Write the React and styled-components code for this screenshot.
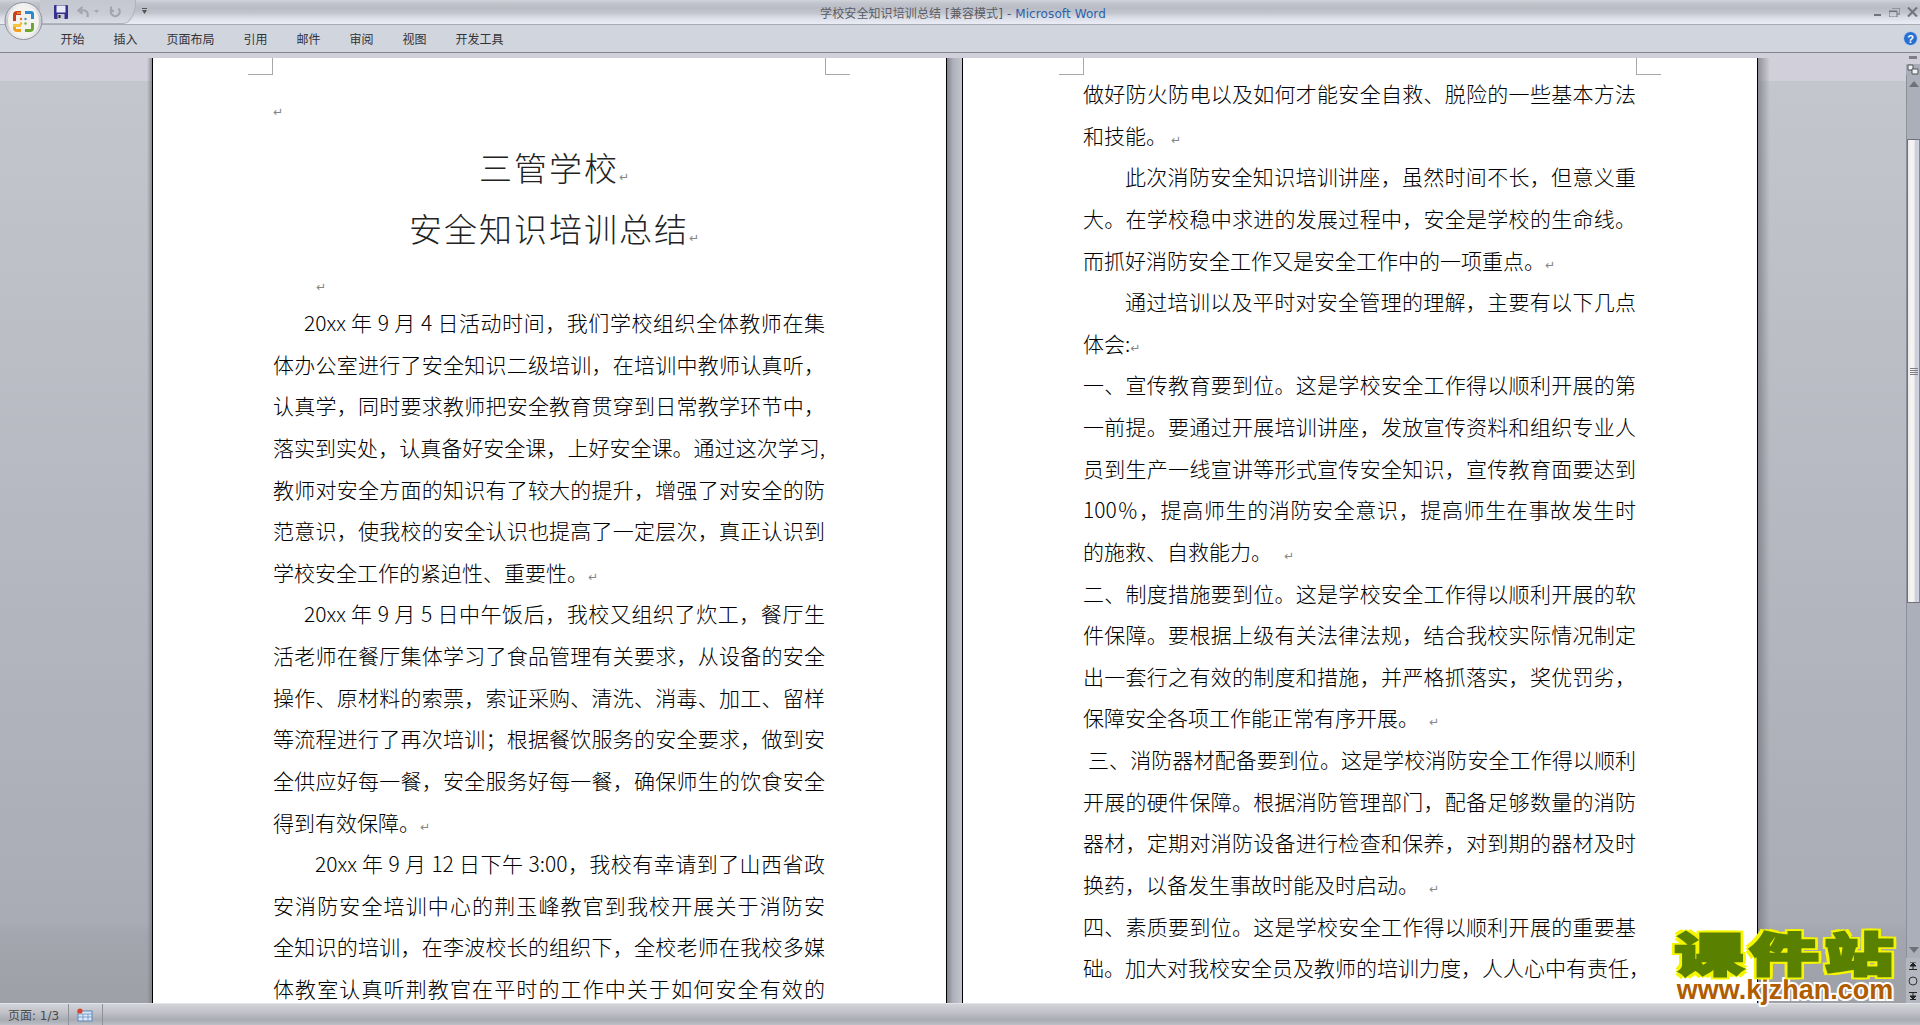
import React from 'react'
import styled, { createGlobalStyle } from 'styled-components'

const CJK = `"Noto Sans CJK SC", "Noto Sans", sans-serif`
const UI = `"DejaVu Sans", "Noto Sans CJK SC", sans-serif`

const GlobalStyle = createGlobalStyle`
  html, body { margin: 0; padding: 0; height: 100%; overflow: hidden; }
  #root { height: 100%; }
`

const Window = styled.div`
  position: relative;
  width: 100%;
  height: 100vh;
  display: flex;
  flex-direction: column;
  overflow: hidden;
  font-family: ${UI};
`

const TitleBar = styled.div`
  height: 24px;
  flex: none;
  display: grid;
  grid-template-columns: 1fr auto 1fr;
  align-items: center;
  border-bottom: 1px solid #a9abb3;
  background: linear-gradient(#d0d3da 0, #c3c5ce 3px, #b9bbc5 8px, #c2c5ce 13px, #d8dbe4 17px, #e8ebf3 23px);
`

const QuickBar = styled.div`
  justify-self: start;
  display: flex;
  align-items: center;
  height: 23px;
  margin-left: 40px;
  padding: 0 0 0 14px;
  width: 81px;
  border: 1px solid #afb2ba;
  border-top: 0;
  border-left: 0;
  border-radius: 0 0 13px 0 / 0 0 22px 0;
  background: linear-gradient(#c4c7cf, #c9ccd4 60%, #d9dce4);
`

const QuickIcon = styled.svg`
  flex: none;
  display: block;
  margin-right: ${props => props.$gap || 0}px;
`

const QuickMenu = styled.svg`
  position: absolute;
  left: 142px;
  top: 8px;
`

const TitleText = styled.div`
  font-size: 12px;
  letter-spacing: 0.1px;
  padding-left: 6px;
  white-space: nowrap;
  color: #585c64;
`

const AppName = styled.span`
  color: #2b62aa;
`

const WindowControls = styled.div`
  justify-self: end;
  display: flex;
  align-items: center;
  gap: 7px;
  padding-right: 2px;
`

const RibbonBar = styled.div`
  height: 27px;
  flex: none;
  display: flex;
  align-items: center;
  padding: 0 2px 0 46px;
  background: #d1d5de;
  border-bottom: 1px solid #83858c;
`

const Tab = styled.div`
  padding: 0 14.5px;
  font-size: 12px;
  font-family: ${CJK};
  color: #333336;
`

const HelpIcon = styled.svg`
  margin-left: auto;
`

const OfficeButton = styled.svg`
  position: absolute;
  left: 4px;
  top: 2px;
`

const Workspace = styled.div`
  flex: 1;
  min-height: 0;
  display: flex;
  background: linear-gradient(#d1cfd9 0, #d1cfd9 28px, #c4c6ce 28px, #a9acb5 870px, #a3a6ae 880px, #9da0a7 100%);
`

const Pages = styled.div`
  flex: 1;
  min-width: 0;
  display: flex;
  padding: 5px 0 0 147px;
  overflow: hidden;
`

const PageEdge = styled.div`
  flex: none;
  width: ${props => props.$width}px;
  background: ${props => `linear-gradient(${props.$to}, rgba(120,122,130,0.75), rgba(120,122,130,0))`};
`

const PageGap = styled.div`
  flex: none;
  width: 15px;
  background: linear-gradient(90deg, #83858c, #aeb1ba 40%, #c2c5cd);
`

const Page = styled.div`
  position: relative;
  flex: none;
  box-sizing: border-box;
  width: ${props => props.$width}px;
  padding: ${props => props.$top}px 121px 0 120px;
  background: #fff;
  border-left: 1px solid #000;
  border-right: 1px solid #000;
  font-family: ${CJK};
  color: #000;
  overflow: hidden;
`

const CropMark = styled.div`
  position: absolute;
  top: 0;
  width: 24px;
  height: 16px;
  border-bottom: 1px solid #a8a8a8;
  ${props => props.$side === 'left'
    ? `left: ${props.$inset}px; border-right: 1px solid #a8a8a8;`
    : `right: ${props.$inset}px; border-left: 1px solid #a8a8a8;`}
`

const BlankLine = styled.div`
  height: ${props => props.$height}px;
  padding-left: ${props => props.$indent || 0}px;
  padding-top: ${props => props.$pad || 0}px;
  box-sizing: border-box;
`

const Heading = styled.div`
  height: 61px;
  line-height: 61px;
  padding-left: 12px;
  text-align: center;
  font-size: 33px;
  font-weight: 300;
  letter-spacing: 2px;
  white-space: nowrap;
  color: #222;
`

const Line = styled.div`
  height: 41.63px;
  line-height: 41.63px;
  padding-left: ${props => props.$indent || 0}px;
  font-size: 21px;
  font-weight: 300;
  white-space: nowrap;
  text-align: justify;
  text-align-last: ${props => props.$full ? 'justify' : 'left'};
`

const Mark = styled.span`
  display: inline-block;
  margin-left: ${props => props.$gap || 0}px;
  font-family: "DejaVu Sans", sans-serif;
  font-size: 12px;
  font-weight: 400;
  line-height: 10px;
  vertical-align: 0;
  color: #858585;
`

const ScrollColumn = styled.div`
  flex: none;
  width: 14px;
  display: flex;
  flex-direction: column;
`

const RulerSlot = styled.div`
  height: 11px;
  padding: 3px 3px 0;
  box-sizing: border-box;
`

const RulerDash = styled.div`
  height: 3px;
  background: #7d7f86;
`

const RulerToggle = styled.div`
  height: 11px;
  display: flex;
  justify-content: center;
  background: #a9adb7;
`

const ScrollButton = styled.div`
  height: ${props => props.$height}px;
  display: flex;
  align-items: center;
  justify-content: center;
  background: #abafb9;
  border-left: 1px solid #8d9099;
`

const ScrollTrack = styled.div`
  flex: 1;
  padding-top: 46px;
  background: #abafb9;
  border-left: 1px solid #8d9099;
`

const ScrollThumb = styled.div`
  box-sizing: border-box;
  height: 464px;
  display: flex;
  flex-direction: column;
  align-items: center;
  justify-content: center;
  gap: 1px;
  border: 1px solid #6f7279;
  border-right-color: #85878e;
  background: linear-gradient(90deg, #e9eaf0 0, #fbf6ec 35%, #eef0f6 55%, #c9ccd8 70%, #d5d8e2 100%);
`

const Grip = styled.div`
  width: 8px;
  height: 1px;
  background: #7c7f86;
`

const NavGroup = styled.div`
  height: 45px;
  display: flex;
  flex-direction: column;
  align-items: center;
  background: #b4b7c0;
`

const NavButton = styled.div`
  height: 15px;
  display: flex;
  align-items: center;
  justify-content: center;
`

const StatusBar = styled.div`
  height: 22px;
  flex: none;
  display: flex;
  align-items: stretch;
  box-sizing: border-box;
  border-top: 1px solid #e3e4e8;
  background: linear-gradient(#d2d4da, #c0c2c8 40%, #a9abb3 75%, #bdbfc6);
`

const StatusItem = styled.div`
  display: flex;
  align-items: center;
  width: ${props => props.$width}px;
  padding-left: ${props => props.$pad}px;
  box-sizing: border-box;
  border-right: 1px solid #8f9198;
  font-size: 12px;
  color: #4a4a4e;
  white-space: nowrap;
`

const Watermark = styled.div`
  position: absolute;
  left: 1668px;
  top: 926px;
  width: 234px;
  display: flex;
  flex-direction: column;
  align-items: center;
`

const MarkName = styled.div`
  font-family: ${CJK};
  font-size: 46px;
  line-height: 50px;
  font-weight: 900;
  letter-spacing: 4px;
  margin-right: -4px;
  color: #5a8000;
  -webkit-text-stroke: 2.5px #5a8000;
  text-shadow: 3px 0 #f5f500, -3px 0 #f5f500, 0 3px #f5f500, 0 -3px #f5f500,
    3px 3px #f5f500, -3px 3px #f5f500, 3px -3px #f5f500, -3px -3px #f5f500;
  transform: scaleX(1.5);
`

const MarkUrl = styled.div`
  font-family: "Liberation Sans", sans-serif;
  font-size: 27px;
  line-height: 28px;
  font-weight: 700;
  color: #b05c00;
  -webkit-text-stroke: 4px #fff;
  paint-order: stroke fill;
`

const tabs = ['开始', '插入', '页面布局', '引用', '邮件', '审阅', '视图', '开发工具']

const leftPage = [
  {
    indent: 31,
    lines: [
      '20xx 年 9 月 4 日活动时间，我们学校组织全体教师在集',
      '体办公室进行了安全知识二级培训，在培训中教师认真听，',
      '认真学，同时要求教师把安全教育贯穿到日常教学环节中，',
      '落实到实处，认真备好安全课，上好安全课。通过这次学习,',
      '教师对安全方面的知识有了较大的提升，增强了对安全的防',
      '范意识，使我校的安全认识也提高了一定层次，真正认识到',
      '学校安全工作的紧迫性、重要性。',
    ],
  },
  {
    indent: 31,
    lines: [
      '20xx 年 9 月 5 日中午饭后，我校又组织了炊工，餐厅生',
      '活老师在餐厅集体学习了食品管理有关要求，从设备的安全',
      '操作、原材料的索票，索证采购、清洗、消毒、加工、留样',
      '等流程进行了再次培训；根据餐饮服务的安全要求，做到安',
      '全供应好每一餐，安全服务好每一餐，确保师生的饮食安全',
      '得到有效保障。',
    ],
  },
  {
    indent: 42,
    open: true,
    lines: [
      '20xx 年 9 月 12 日下午 3:00，我校有幸请到了山西省政',
      '安消防安全培训中心的荆玉峰教官到我校开展关于消防安',
      '全知识的培训，在李波校长的组织下，全校老师在我校多媒',
      '体教室认真听荆教官在平时的工作中关于如何安全有效的',
    ],
  },
]

const rightPage = [
  {
    lines: ['做好防火防电以及如何才能安全自救、脱险的一些基本方法', '和技能。'],
    gap: 4,
  },
  {
    indent: 42,
    lines: [
      '此次消防安全知识培训讲座，虽然时间不长，但意义重',
      '大。在学校稳中求进的发展过程中，安全是学校的生命线。',
      '而抓好消防安全工作又是安全工作中的一项重点。',
    ],
  },
  {
    indent: 42,
    lines: ['通过培训以及平时对安全管理的理解，主要有以下几点', '体会:'],
  },
  {
    lines: [
      '一、宣传教育要到位。这是学校安全工作得以顺利开展的第',
      '一前提。要通过开展培训讲座，发放宣传资料和组织专业人',
      '员到生产一线宣讲等形式宣传安全知识，宣传教育面要达到',
      '100％，提高师生的消防安全意识，提高师生在事故发生时',
      '的施救、自救能力。',
    ],
    gap: 12,
  },
  {
    lines: [
      '二、制度措施要到位。这是学校安全工作得以顺利开展的软',
      '件保障。要根据上级有关法律法规，结合我校实际情况制定',
      '出一套行之有效的制度和措施，并严格抓落实，奖优罚劣，',
      '保障安全各项工作能正常有序开展。',
    ],
    gap: 10,
  },
  {
    indent: 5,
    lines: [
      '三、消防器材配备要到位。这是学校消防安全工作得以顺利',
      '开展的硬件保障。根据消防管理部门，配备足够数量的消防',
      '器材，定期对消防设备进行检查和保养，对到期的器材及时',
      '换药，以备发生事故时能及时启动。',
    ],
    gap: 10,
  },
  {
    open: true,
    lines: [
      '四、素质要到位。这是学校安全工作得以顺利开展的重要基',
      '础。加大对我校安全员及教师的培训力度，人人心中有责任，',
    ],
  },
]

function Paragraph({ indent, lines, open, gap }) {
  return lines.map((text, i) => {
    const last = i === lines.length - 1 && !open
    return (
      <Line key={i} $indent={i === 0 ? indent : 0} $full={!last}>
        {text}
        {last && <Mark $gap={gap}>↵</Mark>}
      </Line>
    )
  })
}

function OfficeLogo() {
  return (
    <OfficeButton width="40" height="40" viewBox="0 0 40 40">
      <defs>
        <linearGradient id="orb" x1="0" y1="0" x2="0" y2="1">
          <stop offset="0" stopColor="#f6f6f8" />
          <stop offset="0.5" stopColor="#c4c7ce" />
          <stop offset="1" stopColor="#f2f2f4" />
        </linearGradient>
      </defs>
      <circle cx="19.5" cy="19" r="18.5" fill="url(#orb)" stroke="#8e9097" />
      <circle cx="19.5" cy="19" r="15.5" fill="#f4f2ee" />
      <path d="M9 13 Q9 9 13 9 H17 V13 H12 V19 H9 Z" fill="#c8401a" />
      <path d="M13 10 H17 V12 H13 Z" fill="#ef7a2a" />
      <path d="M21 9 H27 Q30 9 30 12 V17 H27 V12 H21 Z" fill="#2f87cc" />
      <path d="M9 22 H12 V27 H17 V30 H13 Q9 30 9 26 Z" fill="#f0a020" />
      <rect x="9" y="22" width="8" height="3" fill="#f6c33c" />
      <path d="M30 21 V26 Q30 30 26 30 H21 V27 H27 V21 Z" fill="#6fa534" />
      <circle cx="17" cy="17" r="1.2" fill="#e0702a" />
      <circle cx="21.5" cy="17" r="1.2" fill="#4a90d0" />
      <circle cx="17" cy="21.5" r="1.2" fill="#f0b030" />
      <circle cx="21.5" cy="21.5" r="1.2" fill="#7ab040" />
    </OfficeButton>
  )
}

function SaveIcon() {
  return (
    <QuickIcon $gap={9} width="14" height="14" viewBox="0 0 14 14">
      <rect x="0" y="0" width="14" height="14" rx="1" fill="#33308f" />
      <rect x="2.5" y="0.5" width="9" height="7" fill="#e8eaf8" />
      <rect x="3.5" y="9" width="7" height="5" fill="#c9cbd4" />
      <rect x="4.5" y="10" width="2" height="3" fill="#222" />
    </QuickIcon>
  )
}

function UndoIcon() {
  return (
    <QuickIcon $gap={5} width="12" height="12" viewBox="0 0 12 12">
      <path d="M10.5 11 C11.5 6 9 3.5 4 4.5 M5.5 1 L1.5 4.5 L5.5 7.5" fill="none" stroke="#a2a5ae" strokeWidth="2.2" />
    </QuickIcon>
  )
}

function SmallArrow() {
  return (
    <QuickIcon $gap={10} width="5" height="3" viewBox="0 0 5 3">
      <path d="M0 0 H5 L2.5 3 Z" fill="#a2a5ae" />
    </QuickIcon>
  )
}

function RedoIcon() {
  return (
    <QuickIcon width="12" height="12" viewBox="0 0 12 12">
      <path d="M9.5 2.5 A4.5 4.5 0 1 1 3 2.5 M2 0.5 V5 H5" fill="none" stroke="#a2a5ae" strokeWidth="2.2" />
    </QuickIcon>
  )
}

function Triangle({ down }) {
  return (
    <svg width="10" height="6" viewBox="0 0 10 6">
      <path d={down ? 'M0 0 H10 L5 6 Z' : 'M0 6 H10 L5 0 Z'} fill="#6e7178" />
    </svg>
  )
}

export default function App() {
  return (
    <Window>
      <GlobalStyle />
      <TitleBar>
        <QuickBar>
          <SaveIcon />
          <UndoIcon />
          <SmallArrow />
          <RedoIcon />
        </QuickBar>
        <TitleText>
          学校安全知识培训总结 [兼容模式] - <AppName>Microsoft Word</AppName>
        </TitleText>
        <WindowControls>
          <svg width="8" height="8" viewBox="0 0 8 8">
            <rect x="0" y="6" width="7" height="2" fill="#70737b" />
          </svg>
          <svg width="11" height="9" viewBox="0 0 11 9">
            <path d="M3 0 H11 V6 H8 M0 3 H8 V9 H0 Z M0 3.5 H8" fill="none" stroke="#70737b" />
          </svg>
          <svg width="11" height="10" viewBox="0 0 11 10">
            <path d="M1 0.5 L10 9.5 M10 0.5 L1 9.5" stroke="#70737b" strokeWidth="2" />
          </svg>
        </WindowControls>
      </TitleBar>
      <QuickMenu width="5" height="6" viewBox="0 0 5 6">
        <rect x="0" y="0" width="5" height="1" fill="#555" />
        <path d="M0 2 H5 L2.5 6 Z" fill="#555" />
      </QuickMenu>
      <OfficeLogo />
      <RibbonBar>
        {tabs.map(t => <Tab key={t}>{t}</Tab>)}
        <HelpIcon width="15" height="15" viewBox="0 0 15 15">
          <circle cx="7.5" cy="7.5" r="7" fill="#2a6fd0" stroke="#c4d8f0" />
          <text x="7.5" y="11.5" textAnchor="middle" fontSize="11" fontWeight="700" fill="#fff" fontFamily="Liberation Sans, sans-serif">?</text>
        </HelpIcon>
      </RibbonBar>
      <Workspace>
        <Pages>
          <PageEdge $width={5} $to="270deg" />
          <Page $width={795} $top={36}>
            <CropMark $side="left" $inset={95} />
            <CropMark $side="right" $inset={96} />
            <BlankLine $height={36} $pad={3}><Mark>↵</Mark></BlankLine>
            <BlankLine $height={7} />
            <Heading>三管学校<Mark>↵</Mark></Heading>
            <Heading>安全知识培训总结<Mark>↵</Mark></Heading>
            <BlankLine $height={43} $indent={43} $pad={13}><Mark>↵</Mark></BlankLine>
            {leftPage.map((p, i) => <Paragraph key={i} {...p} />)}
          </Page>
          <PageGap />
          <Page $width={796} $top={15}>
            <CropMark $side="left" $inset={96} />
            <CropMark $side="right" $inset={96} />
            {rightPage.map((p, i) => <Paragraph key={i} {...p} />)}
          </Page>
          <PageEdge $width={12} $to="90deg" />
        </Pages>
        <ScrollColumn>
          <RulerSlot><RulerDash /></RulerSlot>
          <RulerToggle>
            <svg width="12" height="11" viewBox="0 0 12 11">
              <path d="M1 1 H6 V6 H1 Z" fill="#eef0f6" stroke="#555" />
              <path d="M5 5 H11 V10 H5 Z" fill="#eef0f6" stroke="#555" />
            </svg>
          </RulerToggle>
          <ScrollButton $height={18}><Triangle /></ScrollButton>
          <ScrollTrack>
            <ScrollThumb>
              <Grip /><Grip /><Grip /><Grip />
            </ScrollThumb>
          </ScrollTrack>
          <ScrollButton $height={17}><Triangle down /></ScrollButton>
          <NavGroup>
            <NavButton>
              <svg width="10" height="8" viewBox="0 0 10 8">
                <path d="M2 0 H8 M5 1 L8 4 H2 Z M1 7.5 H9 M5 4 V7" stroke="#222" fill="#222" />
              </svg>
            </NavButton>
            <NavButton>
              <svg width="10" height="10" viewBox="0 0 10 10">
                <circle cx="5" cy="5" r="4" fill="#b9bcc4" stroke="#333" />
              </svg>
            </NavButton>
            <NavButton>
              <svg width="10" height="8" viewBox="0 0 10 8">
                <path d="M2 7.5 H8 M5 7 L8 4 H2 Z M1 0.5 H9 M5 4 V1" stroke="#222" fill="#222" />
              </svg>
            </NavButton>
          </NavGroup>
        </ScrollColumn>
      </Workspace>
      <StatusBar>
        <StatusItem $width={69} $pad={8}>页面: 1/3</StatusItem>
        <StatusItem $width={34} $pad={8}>
          <svg width="16" height="14" viewBox="0 0 16 14">
            <rect x="1" y="3" width="14" height="10" fill="#dce8f6" stroke="#5b86b8" />
            <path d="M1 6 H15 M1 9 H15 M6 6 V13 M11 6 V13" stroke="#7aa0cc" />
            <circle cx="3" cy="3" r="2.6" fill="#d8452a" />
          </svg>
        </StatusItem>
      </StatusBar>
      <Watermark>
        <MarkName>课件站</MarkName>
        <MarkUrl>www.kjzhan.com</MarkUrl>
      </Watermark>
    </Window>
  )
}
